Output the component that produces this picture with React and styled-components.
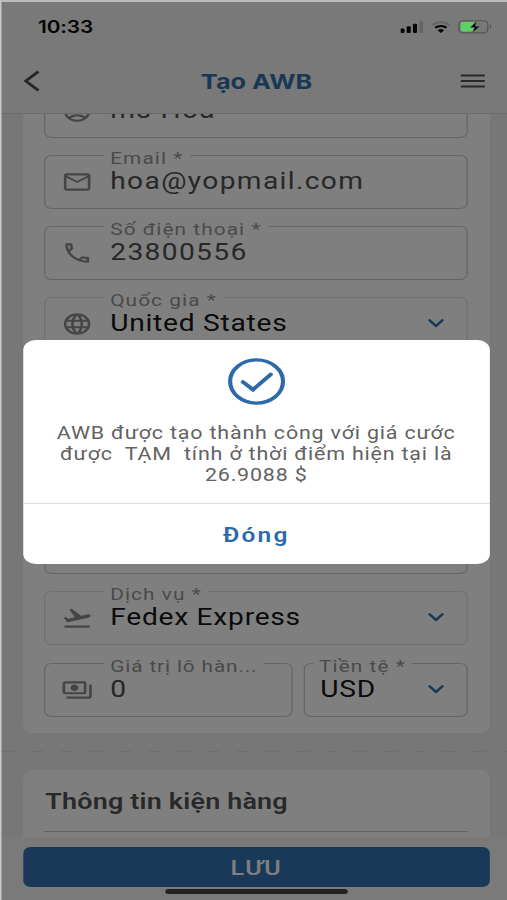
import React from "react";
import styled, { createGlobalStyle } from "styled-components";
import {
  MdOutlineAccountCircle,
  MdOutlineEmail,
  MdOutlineLocalPhone,
  MdLanguage,
  MdFlightTakeoff,
  MdOutlinePayments,
} from "react-icons/md";

const GlobalStyle = createGlobalStyle`
  * {
    box-sizing: border-box;
  }

  body {
    margin: 0;
    overflow: hidden;
    background: #c4c4c4;
  }
`;

// phone layout is 414 wide, the window is 507
const Screen = styled.div`
  position: relative;
  display: flex;
  flex-direction: column;
  width: 414px;
  height: 900px;
  border-left: 1.5px solid #c8c8c8;
  border-top: 2px solid #bcbcbc;
  transform: scaleX(1.22464);
  transform-origin: 0 0;
  overflow: hidden;
  background: #f2f2f2;
  font-family: "Roboto", sans-serif;
`;

const StatusBar = styled.div`
  position: relative;
  z-index: 3;
  display: flex;
  align-items: center;
  justify-content: space-between;
  height: 50px;
  flex: none;
  padding: 0 12px 0 30px;
`;

const Time = styled.div`
  font-family: "Inter", sans-serif;
  font-weight: 600;
  font-size: 17px;
  letter-spacing: -0.1px;
  color: #050505;
`;

const StatusIcons = styled.div`
  display: flex;
  align-items: center;
  gap: 6px;

  svg {
    display: block;
  }
`;

const Header = styled.div`
  display: flex;
  align-items: center;
  justify-content: space-between;
  height: 62px;
  flex: none;
  padding: 0 17.5px 3px;
  border-bottom: 1px solid #d6d6d6;

  svg {
    display: block;
  }
`;

const Title = styled.h1`
  margin: 0;
  padding: 1px 0 0 10px;
  font-family: "Inter", sans-serif;
  font-weight: 700;
  font-size: 20.7px;
  color: #3371ad;
`;

const Body = styled.div`
  height: 723px;
  flex: none;
  overflow: hidden;
  background: #efefef;
`;

const Card = styled.div`
  display: flex;
  flex-direction: column;
  gap: 17px;
  width: 381px;
  margin-left: 18px;
  padding: 0 18px 0 17px;
  background: #ffffff;
`;

const AddressCard = styled(Card)`
  height: 619px;
  border-radius: 0 0 8px 8px;
`;

const FieldBox = styled.div`
  position: relative;
  display: flex;
  align-items: center;
  flex: ${(props) => props.$grow || "none"};
  height: 54px;
  padding: 0 18.5px 1px 13px;
  border: 1px solid ${(props) => (props.$faint ? "#e0e0e0" : "#cacaca")};
  border-radius: 6px;
  color: ${(props) => (props.$dark ? "#161616" : "#505050")};
  letter-spacing: ${(props) => (props.$dark ? 0.6 : 1.1)}px;

  &:first-child {
    margin-top: ${(props) => props.$pull || 0}px;
  }

  svg {
    display: block;
    flex: none;
  }
`;

const IconSlot = styled.div`
  width: 26px;
  height: 26px;
  margin-right: 14px;
  font-size: 26px;
  color: #8a8a8a;
`;

const FieldLabel = styled.div`
  position: absolute;
  top: -7px;
  left: ${(props) => (props.$bare ? 7 : 48)}px;
  padding: 0 5px;
  line-height: 18px;
  font-size: 17px;
  letter-spacing: ${(props) => (props.$tight ? 0.7 : 0.87)}px;
  white-space: nowrap;
  color: #949494;
  background: #ffffff;
`;

const Value = styled.div`
  flex: 1;
  font-size: 23px;
  line-height: 28px;
  white-space: nowrap;
`;

const Row = styled.div`
  display: flex;
  gap: 9px;
  margin-top: 1px;
`;

const Spacer = styled.div`
  height: 135px;
  flex: none;
`;

const Dashes = styled.div`
  height: 1px;
  margin: 18px 0;
  background: repeating-linear-gradient(
    90deg,
    #dedede 0 11px,
    transparent 11px 24px
  );
`;

const PackageCard = styled(Card)`
  height: 80px;
  border-radius: 8px 8px 0 0;
`;

const SectionTitle = styled.h2`
  height: 62px;
  margin: 0;
  padding-left: 1px;
  border-bottom: 1px solid #c6c6c6;
  font-weight: 600;
  font-size: 22px;
  line-height: 63px;
  letter-spacing: 0.15px;
  white-space: nowrap;
  color: #525252;
`;

const Footer = styled.div`
  flex: 1;
  padding: 10px 14px 0 17.5px;
  background: #f5f5f5;
`;

const SaveButton = styled.div`
  height: 40px;
  border-radius: 6px;
  background: #3473b0;
  color: #ffffff;
  font-weight: 500;
  font-size: 20.5px;
  line-height: 43px;
  letter-spacing: 1px;
  text-align: center;
`;

const HomeBar = styled.div`
  position: absolute;
  z-index: 3;
  left: 134px;
  bottom: 6px;
  width: 149px;
  height: 5px;
  border-radius: 3px;
  background: #222222;
`;

const Backdrop = styled.div`
  position: absolute;
  inset: 0;
  z-index: 2;
  padding: 338px 14px 0 17.5px;
  background: rgba(0, 0, 0, 0.5);
`;

const Dialog = styled.div`
  height: 224px;
  border-radius: 10px;
  background: #ffffff;
  text-align: center;
`;

const DialogBody = styled.div`
  display: flex;
  flex-direction: column;
  align-items: center;
  height: 164px;
  padding-top: 18px;
  border-bottom: 1px solid #dcdcdc;
`;

const Message = styled.p`
  margin: 18px 0 0;
  font-size: 17.5px;
  line-height: 21px;
  letter-spacing: 0.67px;
  white-space: pre;
  color: #626262;
`;

const CloseButton = styled.div`
  font-weight: 600;
  font-size: 20px;
  line-height: 63px;
  letter-spacing: 1.8px;
  color: #2e6aa8;
`;

const Chevron = () => (
  <svg width="14" height="12" viewBox="0 0 14 12" fill="none">
    <path
      d="M1.8 2.3 7 8.1l5.2-5.8"
      stroke="#3371ad"
      strokeWidth="2.3"
      strokeLinecap="round"
      strokeLinejoin="round"
    />
  </svg>
);

const Field = ({ icon: Icon, label, value, select, tight, ...rest }) => (
  <FieldBox $dark={select} {...rest}>
    {Icon && (
      <IconSlot>
        <Icon />
      </IconSlot>
    )}
    {label && (
      <FieldLabel $bare={!Icon} $tight={tight}>
        {label}
      </FieldLabel>
    )}
    <Value>{value}</Value>
    {select && <Chevron />}
  </FieldBox>
);

const Signal = () => (
  <svg width="19" height="12" viewBox="0 0 19 12">
    <rect x="0" y="7.5" width="3.3" height="4.5" rx="1" fill="#050505" />
    <rect x="5.1" y="5.3" width="3.3" height="6.7" rx="1" fill="#050505" />
    <rect x="10.2" y="2.8" width="3.3" height="9.2" rx="1" fill="#050505" />
    <rect x="15.3" y="0" width="3.3" height="12" rx="1" fill="#666666" />
  </svg>
);

const Wifi = () => (
  <svg width="16" height="12" viewBox="0 0 16 12" fill="none">
    <path d="M1 4.2a10 10 0 0 1 14 0" stroke="#666666" strokeWidth="2" />
    <path d="M3.4 6.8a6.6 6.6 0 0 1 9.2 0" stroke="#050505" strokeWidth="2" />
    <path d="M5.3 9.2a3.9 3.9 0 0 1 5.4 0L8 12z" fill="#050505" />
  </svg>
);

const Battery = () => (
  <svg width="28" height="14" viewBox="0 0 28 14" fill="none">
    <rect x="0.7" y="0.7" width="23.6" height="12.2" rx="3.6" stroke="#565656" strokeWidth="1.1" />
    <path d="M26 4.6c1.6.6 1.6 3.6 0 4.3z" fill="#565656" />
    <rect x="2.1" y="2" width="11.5" height="9.6" rx="2" fill="#5fd068" />
    <path
      d="M15.2 1.2 9.8 7.6h3.6l-1.8 5.2L18 6.2h-3.8z"
      fill="#050505"
      stroke="#797979"
      strokeWidth="0.5"
    />
  </svg>
);

const App = () => {
  return (
    <>
      <GlobalStyle />
      <Screen>
        <StatusBar>
          <Time>10:33</Time>
          <StatusIcons>
            <Signal />
            <Wifi />
            <Battery />
          </StatusIcons>
        </StatusBar>
        <Header>
          <svg width="14" height="22" viewBox="0 0 14 22" fill="none">
            <path d="M12.4 1.5 2 11l10.4 9.5" stroke="#505050" strokeWidth="2.6" />
          </svg>
          <Title>Tạo AWB</Title>
          <svg width="20" height="14" viewBox="0 0 20 14" fill="none">
            <path
              d="M1 1.5h18M1 7h18M1 12.5h18"
              stroke="#505050"
              strokeWidth="2.2"
              strokeLinecap="round"
            />
          </svg>
        </Header>
        <Body>
          <AddressCard>
            <Field $pull={-30} icon={MdOutlineAccountCircle} value="ms Hoa" />
            <Field icon={MdOutlineEmail} label="Email *" value="hoa@yopmail.com" />
            <Field icon={MdOutlineLocalPhone} label="Số điện thoại *" value="23800556" />
            <Field $faint select icon={MdLanguage} label="Quốc gia *" value="United States" />
            <Spacer />
            <FieldBox />
            <Field $faint select icon={MdFlightTakeoff} label="Dịch vụ *" value="Fedex Express" />
            <Row>
              <Field
                $grow="0 0 202.5px"
                tight
                icon={MdOutlinePayments}
                label="Giá trị lô hàn..."
                value="0"
              />
              <Field $grow="1" select label="Tiền tệ *" value="USD" />
            </Row>
          </AddressCard>
          <Dashes />
          <PackageCard>
            <SectionTitle>Thông tin kiện hàng</SectionTitle>
          </PackageCard>
        </Body>
        <Footer>
          <SaveButton>LƯU</SaveButton>
        </Footer>
        <Backdrop>
          <Dialog>
            <DialogBody>
              <svg width="47" height="47" viewBox="0 0 47 47" fill="none">
                <circle cx="23.5" cy="23.5" r="21.6" stroke="#2e6aa8" strokeWidth="3.4" />
                <path
                  d="m12.4 24 8.2 7.6L35 16.4"
                  stroke="#2e6aa8"
                  strokeWidth="3.6"
                  strokeLinecap="round"
                />
              </svg>
              <Message>
                {"AWB được tạo thành công với giá cước\nđược  TẠM  tính ở thời điểm hiện tại là\n26.9088 $"}
              </Message>
            </DialogBody>
            <CloseButton>Đóng</CloseButton>
          </Dialog>
        </Backdrop>
        <HomeBar />
      </Screen>
    </>
  );
};

export default App;
